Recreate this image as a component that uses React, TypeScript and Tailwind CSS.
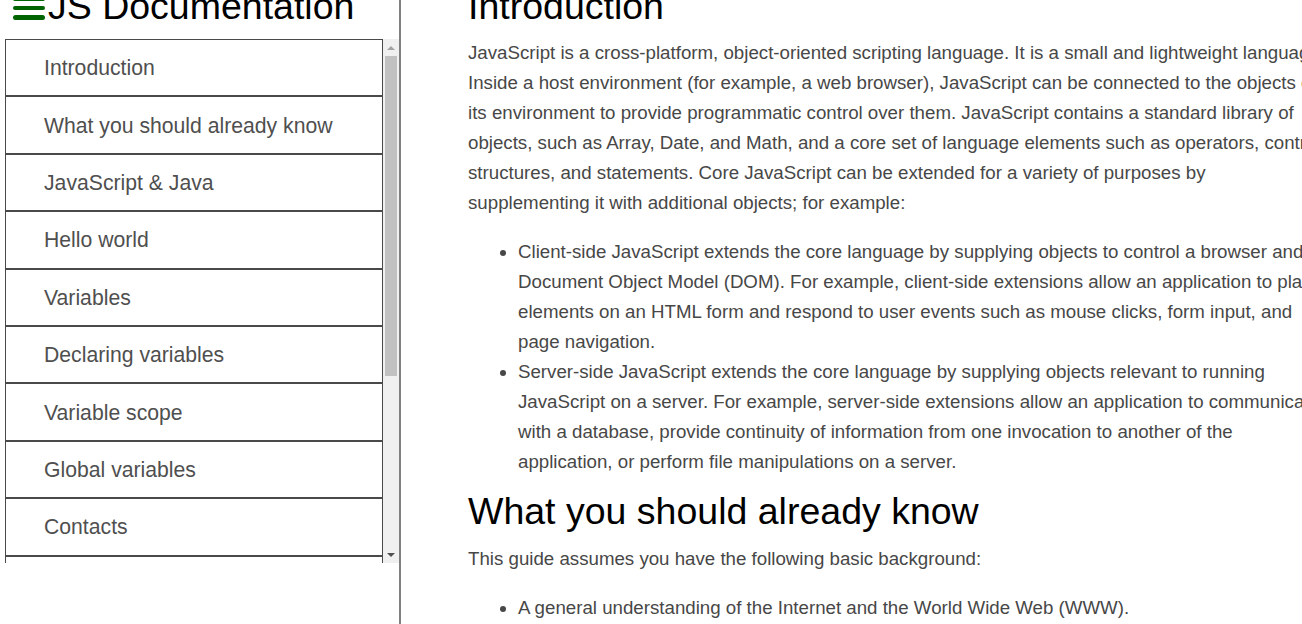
import React from "react";

const navItems = [
  "Introduction",
  "What you should already know",
  "JavaScript & Java",
  "Hello world",
  "Variables",
  "Declaring variables",
  "Variable scope",
  "Global variables",
  "Contacts",
  "Constants",
];

const Scrollbar = () => (
  <div className="w-[16px] h-full shrink-0 bg-[#f0f0f0] flex flex-col">
    <div className="h-[17px] flex items-center justify-center">
      <div className="w-0 h-0 border-x-[4px] border-x-transparent border-b-[4px] border-b-[#a3a3a3]" />
    </div>
    <div className="h-[320px] mx-[2px] bg-[#c1c1c1]" />
    <div className="flex-1" />
    <div className="h-[17px] flex items-center justify-center">
      <div className="w-0 h-0 border-x-[4px] border-x-transparent border-t-[4px] border-t-[#505050]" />
    </div>
  </div>
);

const Sidebar = () => (
  <aside className="w-[401px] h-full shrink-0 border-r-2 border-[#808080] pl-[5px] flex flex-col">
    <header className="-mt-[15.4px] h-[43px] flex items-start">
      <div className="ml-[8px] mt-[12px] flex flex-col gap-[4.8px]">
        <span className="block w-[32px] h-[4.5px] rounded-full bg-[#006400]" />
        <span className="block w-[32px] h-[4.5px] rounded-full bg-[#006400]" />
        <span className="block w-[32px] h-[4.5px] rounded-full bg-[#006400]" />
      </div>
      <h1 className="ml-[3px] text-[37.5px] leading-[43px] font-normal text-black whitespace-nowrap">
        JS Documentation
      </h1>
    </header>

    <nav className="mt-[11.4px] h-[524px] flex overflow-hidden">
      <ul className="flex-1 min-w-0">
        {navItems.map((item) => (
          <li
            key={item}
            className="h-[57.4px] border border-[#4a4a4a] flex items-center pl-[38px] pt-[1px] text-[21.2px] text-[#4f4f4f] whitespace-nowrap"
          >
            {item}
          </li>
        ))}
      </ul>
      <Scrollbar />
    </nav>
  </aside>
);

export default function App() {
  return (
    <div className="h-[624px] w-full overflow-hidden flex bg-white font-['Liberation_Sans',Arial,sans-serif]">
      <Sidebar />

      <main className="w-[930px] shrink-0 pl-[67px] -mt-[15.4px] text-[18.7px] leading-[30px] text-[#474747]">
        <section>
          <h2 className="text-[37.5px] leading-[43px] font-normal text-black mb-[10.4px]">
            Introduction
          </h2>
          <p className="mb-[19px]">
            JavaScript is a cross-platform, object-oriented scripting language.
            It is a small and lightweight language. Inside a host environment
            (for example, a web browser), JavaScript can be connected to the
            objects of its environment to provide programmatic control over
            them. JavaScript contains a standard library of objects, such as
            Array, Date, and Math, and a core set of language elements such as
            operators, control structures, and statements. Core JavaScript can
            be extended for a variety of purposes by supplementing it with
            additional objects; for example:
          </p>
          <ul className="list-disc pl-[50px] mb-[12.6px]">
            <li>
              Client-side JavaScript extends the core language by supplying
              objects to control a browser and its Document Object Model (DOM).
              For example, client-side extensions allow an application to place
              elements on an HTML form and respond to user events such as mouse
              clicks, form input, and page navigation.
            </li>
            <li>
              Server-side JavaScript extends the core language by supplying
              objects relevant to running JavaScript on a server. For example,
              server-side extensions allow an application to communicate with a
              database, provide continuity of information from one invocation
              to another of the application, or perform file manipulations on a
              server.
            </li>
          </ul>
        </section>

        <section>
          <h2 className="text-[37.5px] leading-[43px] font-normal text-black mb-[11.4px]">
            What you should already know
          </h2>
          <p className="mb-[19px]">
            This guide assumes you have the following basic background:
          </p>
          <ul className="list-disc pl-[50px]">
            <li>
              A general understanding of the Internet and the World Wide Web
              (WWW).
            </li>
            <li>Good working knowledge of HyperText Markup Language (HTML).</li>
            <li>
              Some programming experience. If you are new to programming, try
              one of the tutorials linked on the main page about JavaScript.
            </li>
          </ul>
        </section>
      </main>
    </div>
  );
}
